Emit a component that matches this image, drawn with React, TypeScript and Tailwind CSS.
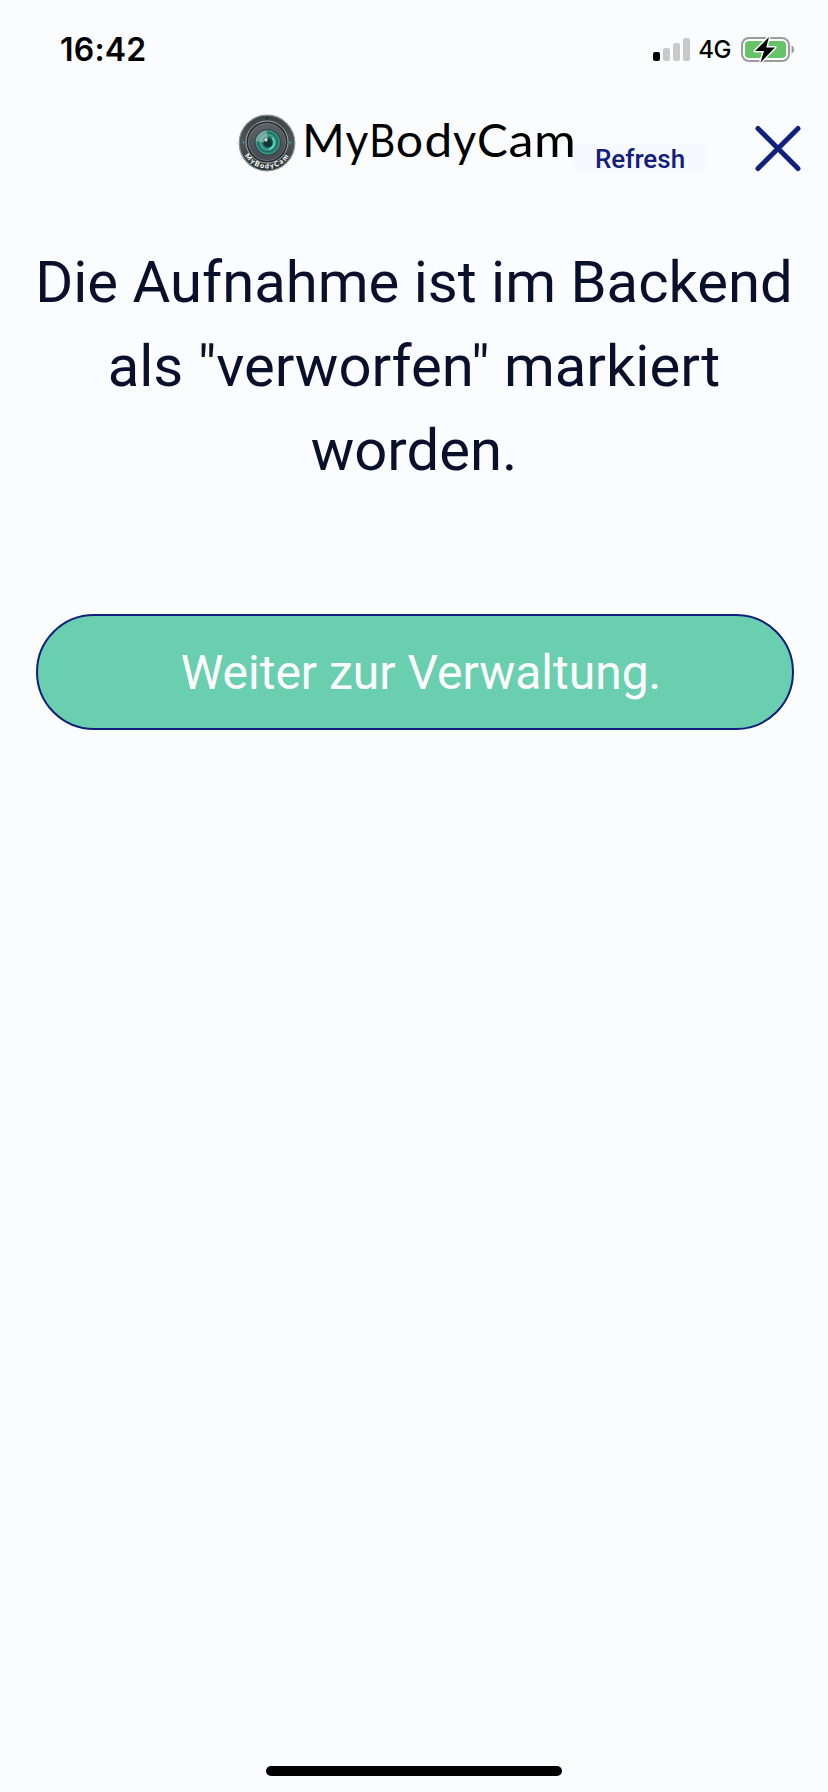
import React from "react";

function StatusBar() {
  return (
    <div className="flex h-[100px] items-center justify-between pl-[60px] pr-[33px] text-black">
      <span className="mb-px font-['Inter'] text-[32px] leading-none font-semibold tracking-[0.2px]">16:42</span>
      <div className="flex items-center">
        <svg width="38" height="24" viewBox="0 0 38 24" className="mr-[7px]">
          <rect x="0" y="14" width="7" height="9" rx="2" fill="#000" />
          <rect x="10" y="10" width="7" height="13" rx="2" fill="#c9c9cb" />
          <rect x="20" y="5" width="7" height="18" rx="2" fill="#c9c9cb" />
          <rect x="30" y="0" width="7" height="23" rx="2" fill="#c9c9cb" />
        </svg>
        <span className="mr-[10px] font-['Inter'] text-[24px] leading-none font-medium tracking-[-0.5px]">4G</span>
        <svg width="54" height="28" viewBox="0 0 54 28">
          <rect x="1" y="2" width="47" height="23" rx="7" fill="none" stroke="#9c9c9e" strokeWidth="2" />
          <rect x="4" y="5" width="41" height="17" rx="4" fill="#65c466" />
          <path d="M50.500 9.500v8c1.700-.6 2.600-2.200 2.600-4s-.9-3.400-2.600-4Z" fill="#9c9c9e" />
          <path
            d="M28 1 14 15H23L19.500 26.500 34 11.500H25.200L28 1Z"
            fill="#000"
            stroke="#fbfcfe"
            strokeWidth="3"
            strokeLinejoin="round"
            paintOrder="stroke"
          />
        </svg>
      </div>
    </div>
  );
}

const wordmark = [
  { glyph: "M", x: 302.3, width: 42.4 },
  { glyph: "y", x: 345.4, width: 22.8 },
  { glyph: "B", x: 369.2, width: 26 },
  { glyph: "o", x: 395.7, width: 27.4 },
  { glyph: "d", x: 424.4, width: 27.8 },
  { glyph: "y", x: 453, width: 23.1 },
  { glyph: "C", x: 476.9, width: 30.8 },
  { glyph: "a", x: 508.5, width: 25 },
  { glyph: "m", x: 533.9, width: 41.8 },
];

function Logo() {
  return (
    <svg width="340" height="72" viewBox="236 106 340 72" className="shrink-0">
      <defs>
        <linearGradient id="rim" x1="0" y1="0" x2="0" y2="1">
          <stop offset="0" stopColor="#3b4344" />
          <stop offset="0.500" stopColor="#4d5557" />
          <stop offset="1" stopColor="#2c3335" />
        </linearGradient>
        <linearGradient id="barrel" x1="0" y1="0" x2="0" y2="1">
          <stop offset="0" stopColor="#5d6268" />
          <stop offset="1" stopColor="#434a50" />
        </linearGradient>
        <radialGradient id="glass">
          <stop offset="0" stopColor="#153c3b" />
          <stop offset="0.350" stopColor="#1c5551" />
          <stop offset="0.580" stopColor="#3fae98" />
          <stop offset="0.720" stopColor="#25615b" />
          <stop offset="0.880" stopColor="#3a9d8b" />
          <stop offset="1" stopColor="#1e3336" />
        </radialGradient>
        <path id="ring-text" d="M243.500 143a23.500 23.500 0 0 0 47 0" />
      </defs>
      <circle cx="267" cy="143" r="27.800" fill="url(#rim)" stroke="#8b9294" strokeWidth="1.200" />
      <circle cx="267" cy="142" r="21" fill="#252c2f" stroke="#a2a8aa" strokeWidth="1" />
      <circle cx="267" cy="142" r="18.500" fill="url(#barrel)" stroke="#7a8184" strokeWidth="0.800" />
      <circle cx="267.800" cy="142.300" r="13" fill="url(#glass)" />
      <path d="M255.500 141a12 12 0 0 1 11-10.500l1.500 8-5 4Z" fill="#a7c5c3" opacity="0.600" />
      <circle cx="268" cy="143" r="4" fill="#123537" />
      <circle cx="266" cy="140" r="1.500" fill="#c3eee3" />
      <path d="M272 138a6.500 6.500 0 0 1-3 11" stroke="#63dcc0" strokeWidth="1.500" fill="none" />
      <circle cx="243.300" cy="142.500" r="1" fill="#2ba4cf" />
      <circle cx="290.500" cy="142.500" r="1" fill="#2ba4cf" />
      <circle cx="267" cy="118.500" r="1" fill="#1a2022" />
      <text fill="#fff" fontFamily="Lato, sans-serif" fontSize="7" fontWeight="900" letterSpacing="1" dy="2">
        <textPath href="#ring-text" startOffset="50%" textAnchor="middle">MyBodyCam</textPath>
      </text>
      <text y="157" fill="#000" fontFamily="Lato, sans-serif" fontSize="46">
        {wordmark.map((letter) => (
          <tspan key={letter.x} x={letter.x} textLength={letter.width} lengthAdjust="spacingAndGlyphs">
            {letter.glyph}
          </tspan>
        ))}
      </text>
    </svg>
  );
}

function Header() {
  return (
    <header className="flex h-[78px] items-start pl-[236px]">
      <div className="mt-[6px] flex">
        <Logo />
      </div>
      <button className="mt-[44px] -ml-[2px] h-[30px] w-[132px] bg-[#f8f9fe] font-['Roboto'] text-[26px] leading-[30px] font-medium text-[#10207c]">
        Refresh
      </button>
      <button aria-label="Close" className="mt-[25px] ml-[48px]">
        <svg width="48" height="48" viewBox="0 0 48 48" fill="none" stroke="#10207c" strokeWidth="5" strokeLinecap="round">
          <path d="M4 3.500 44 43.500M44 3.500 4 43.500" />
        </svg>
      </button>
    </header>
  );
}

export default function App() {
  return (
    <div className="flex h-[1792px] w-[828px] flex-col bg-[#fbfcfe]">
      <StatusBar />
      <Header />
      <main className="flex grow flex-col px-[36px] pt-[62px]">
        <h1 className="-mx-4 text-center font-['Roboto'] text-[58px] leading-[84px] font-normal text-[#0a0f2c]">
          Die Aufnahme ist im Backend
          <br />
          als "verworfen" markiert
          <br />
          worden.
        </h1>
        <button className="mt-[122px] h-[116px] w-[758px] rounded-full border-2 border-[#10207c] bg-[#6acfaf] pt-[2px] pl-[12px] font-['Roboto'] text-[48px] leading-none text-white">
          Weiter zur Verwaltung.
        </button>
      </main>
      <div className="mb-[16px] ml-[266px] h-[10px] w-[296px] rounded-full bg-black" />
    </div>
  );
}
